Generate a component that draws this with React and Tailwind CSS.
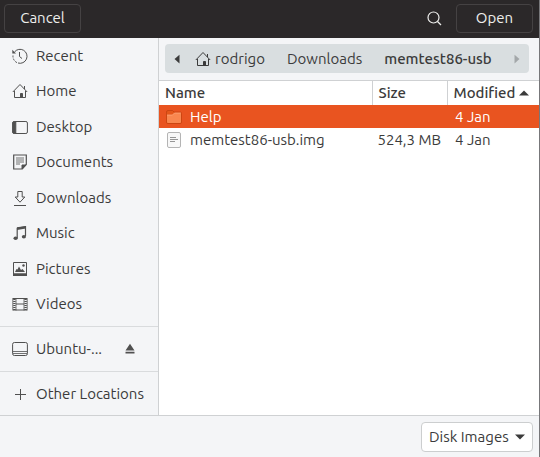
import { useState } from 'react';

const Icon = ({ children, className = 'size-4' }) => (
  <svg viewBox="0 0 16 16" className={`${className} shrink-0`} fill="none" stroke="currentColor" strokeWidth="1" aria-hidden="true">
    {children}
  </svg>
);

const HomeIcon = () => (
  <Icon>
    <path d="M.8 9 8 1.5 15.2 9M2.5 8v6.5h11V8M12.5 6V3" />
    <path d="M8.500 10.500h2v4h-2z" fill="currentColor" />
  </Icon>
);

const places = [
  {
    name: 'Recent',
    icon: (
      <Icon>
        <path d="M2.500 4A7 7 0 1 1 6 15" />
        <path d="M1 7.500A7 7 0 0 0 6 15" strokeDasharray="2 1.200" />
        <path d="M7.500 4v4.500L10 10.500" />
        <path d="M.3 1.800v3.700H4z" fill="currentColor" stroke="none" />
      </Icon>
    ),
  },
  { name: 'Home', icon: <HomeIcon /> },
  {
    name: 'Desktop',
    icon: (
      <Icon>
        <rect x=".6" y="2.5" width="14.8" height="12" rx="1.5" />
        <path d="M1 3h2.800v11H1z" fill="currentColor" />
      </Icon>
    ),
  },
  {
    name: 'Documents',
    icon: (
      <Icon>
        <path d="M1.700 1h12.600v9.500l-4 4.500H1.700z" strokeWidth="1.200" />
        <path d="M4 4h8M4 6h8M4 8h8M4 10h4" strokeWidth=".8" />
        <path d="M10 11h4l-4 4z" fill="currentColor" />
      </Icon>
    ),
  },
  {
    name: 'Downloads',
    icon: (
      <Icon>
        <path d="M5.800 1.500h4.400V7h2.600L8 12.200 3.200 7h2.600zM2 15.500h12" />
      </Icon>
    ),
  },
  {
    name: 'Music',
    icon: (
      <Icon>
        <path d="M5.200 13V3.200l8.300-1.500V11" strokeWidth="1.200" />
        <path d="M5 2.200 14 1v2.500L5 5z" fill="currentColor" stroke="none" />
        <ellipse cx="3.600" cy="13.200" rx="2.100" ry="1.700" fill="currentColor" stroke="none" />
        <ellipse cx="11.900" cy="11.800" rx="2.100" ry="1.700" fill="currentColor" stroke="none" />
      </Icon>
    ),
  },
  {
    name: 'Pictures',
    icon: (
      <Icon>
        <path d="M1.500 1.500h13v13h-13z" />
        <path d="M1 12.300h14V15H1zM3 11l1.500-3 1 .5L7 5.500l2 3.500 1.500-1L13 11z" fill="currentColor" stroke="none" />
        <circle cx="11.500" cy="4.500" r="1.200" fill="currentColor" stroke="none" />
      </Icon>
    ),
  },
  {
    name: 'Videos',
    icon: (
      <Icon>
        <path d="M1 2.500h14M4 8h8M1 14h14" />
        <path d="M.8 2v12.500M4 2v12.500M12 2v12.500M15.200 2v12.500" strokeWidth=".8" />
        <path d="M2.400 3v11M13.600 3v11" strokeWidth="2.400" strokeDasharray="1 1" />
      </Icon>
    ),
  },
];

const files = [
  { name: 'Help', folder: true, size: '', modified: '4 Jan' },
  { name: 'memtest86-usb.img', folder: false, size: '524,3 MB', modified: '4 Jan' },
];

const FolderIcon = () => (
  <svg viewBox="0 0 16 16" className="size-4 shrink-0" aria-hidden="true">
    <path d="M.5 3A1.500 1.500 0 0 1 2 1.500h4.500L8 3h6a1.500 1.500 0 0 1 1.500 1.500V13a1.500 1.500 0 0 1-1.500 1.500H2A1.500 1.500 0 0 1 .5 13z" fill="#e4571a" stroke="#c4420f" strokeWidth=".8" />
    <path d="M1 6h5.500l2-2H14a1 1 0 0 1 1 1v8a1 1 0 0 1-1 1H2a1 1 0 0 1-1-1z" fill="#f9874f" />
    <path d="M1 6h5.500l2-2H15" fill="none" stroke="#ffae85" strokeWidth=".7" />
  </svg>
);

const FileIcon = () => (
  <svg viewBox="0 0 16 16" className="size-4 shrink-0" fill="none" aria-hidden="true">
    <rect x="1.500" y=".5" width="13" height="15" rx="1.500" fill="#f8f8f8" stroke="#b4b4b4" />
    <path d="M4 5.500h6M4 7.500h8M4 9.500h5" stroke="#8a8a8a" strokeWidth=".9" />
  </svg>
);

function PlaceButton({ icon, children }) {
  return (
    <button type="button" className="flex h-full min-w-0 flex-1 items-center gap-2 pl-3 text-left">
      <span className="text-[#505050]">{icon}</span>
      <span className="whitespace-nowrap">{children}</span>
    </button>
  );
}

export default function App() {
  const [selected, setSelected] = useState('Help');
  const [filter, setFilter] = useState('Disk Images');

  return (
    <div className="flex min-h-screen flex-col border-r border-[#77777a] bg-[#f4f5f7] font-['Ubuntu','Noto_Sans',sans-serif] text-[15px] leading-5 text-[#3b3b3b]">
      <header className="flex h-[38px] shrink-0 items-center bg-[#2b2829] pr-1.5 pb-0.5 pl-1 text-[#eeeeec]">
        <button type="button" className="h-[29px] w-[77px] rounded border border-[#454243]">Cancel</button>
        <button type="button" aria-label="Search" className="mr-3 ml-auto p-0.5">
          <Icon>
            <circle cx="7.500" cy="7.500" r="5.500" strokeWidth="1.200" />
            <path d="m11.500 11.500 3.500 3.500" strokeWidth="1.300" />
          </Icon>
        </button>
        <button type="button" className="h-[29px] w-[77px] rounded border border-[#454243]">Open</button>
      </header>

      <main className="flex flex-1">
        <nav className="w-[159px] shrink-0 border-r border-[#cfd1d3]">
          <ul className="grid h-[284px] auto-rows-fr">
            {places.map((place) => (
              <li key={place.name} className="flex items-center">
                <PlaceButton icon={place.icon}>{place.name}</PlaceButton>
              </li>
            ))}
          </ul>
          <div className="mt-1 flex h-[45px] items-center border-t border-[#d9dbdd]">
            <PlaceButton
              icon={
                <Icon>
                  <rect x=".6" y="1.500" width="14.800" height="13" rx="1.800" />
                  <path d="M1 10.500h14M1 12.500h14" strokeWidth=".8" />
                </Icon>
              }
            >
              Ubuntu-...
            </PlaceButton>
            <button type="button" aria-label="Eject" className="mr-5 p-0.5 text-[#505050]">
              <Icon className="size-3">
                <path d="M8 1l6 9H2zM2 11.500h12V14H2z" fill="currentColor" stroke="none" />
              </Icon>
            </button>
          </div>
          <div className="flex h-11 items-center border-t border-[#d9dbdd]">
            <PlaceButton icon={<Icon><path d="M8.500 3v11M3 8.500h11" /></Icon>}>
              Other Locations
            </PlaceButton>
          </div>
        </nav>

        <section className="flex min-w-0 flex-1 flex-col bg-white">
          <div className="border-b border-[#cfd1d3] bg-[#f4f5f7] px-1.5 pt-1.5 pb-[7px]">
            <div className="mr-1 flex h-[29px] items-center rounded bg-[#d9dee0]">
              <button type="button" aria-label="Back" className="flex h-full w-6 items-center justify-center">
                <Icon className="size-2.5"><path d="M12 1v14L4 8z" fill="currentColor" stroke="none" /></Icon>
              </button>
              <button type="button" className="ml-1.5 flex items-center gap-1"><HomeIcon />rodrigo</button>
              <button type="button" className="ml-[22px]">Downloads</button>
              <button type="button" className="ml-[22px] font-medium">memtest86-usb</button>
              <button type="button" aria-label="Forward" className="ml-auto flex h-full w-6 items-center justify-center text-[#a3a7a9]">
                <Icon className="size-2.5"><path d="M4 1v14l8-7z" fill="currentColor" stroke="none" /></Icon>
              </button>
            </div>
          </div>

          <table className="w-full table-fixed border-collapse">
            <thead>
              <tr className="h-6 text-left">
                <th scope="col" className="p-0 pl-1.5 font-medium">Name</th>
                <th scope="col" className="w-[75px] border-l border-[#cfd1d3] p-0 pl-1.5 font-medium">Size</th>
                <th scope="col" aria-sort="ascending" className="w-[92px] border-l border-[#cfd1d3] p-0 pl-1.5 font-medium">
                  <button type="button" className="flex items-center gap-1">
                    Modified
                    <Icon className="size-2.5"><path d="M0 12 8 4l8 8z" fill="currentColor" stroke="none" /></Icon>
                  </button>
                </th>
              </tr>
            </thead>
            <tbody>
              {files.map((file) => (
                <tr
                  key={file.name}
                  onClick={() => setSelected(file.name)}
                  className={selected === file.name ? 'h-[23px] bg-[#e95420] text-white' : 'h-[23px]'}
                >
                  <td className="p-0 pl-[7px]">
                    <div className="flex items-center gap-2">
                      {file.folder ? <FolderIcon /> : <FileIcon />}
                      {file.name}
                    </div>
                  </td>
                  <td className="p-0 pr-1.5 text-right whitespace-nowrap">{file.size}</td>
                  <td className="p-0 pl-2">{file.modified}</td>
                </tr>
              ))}
            </tbody>
          </table>
        </section>
      </main>

      <footer className="flex h-[42px] shrink-0 items-center justify-end border-t border-[#cfd1d3] pr-1.5">
        <div className="relative">
          <select
            aria-label="File type"
            value={filter}
            onChange={(e) => setFilter(e.target.value)}
            className="h-[30px] w-28 appearance-none rounded border border-[#cccecf] bg-white pl-[7px]"
          >
            <option>Disk Images</option>
            <option>All Files</option>
          </select>
          <span className="pointer-events-none absolute inset-y-0 right-2 flex items-center">
            <Icon className="size-2.5"><path d="m0 4 8 8 8-8z" fill="currentColor" stroke="none" /></Icon>
          </span>
        </div>
      </footer>
    </div>
  );
}
